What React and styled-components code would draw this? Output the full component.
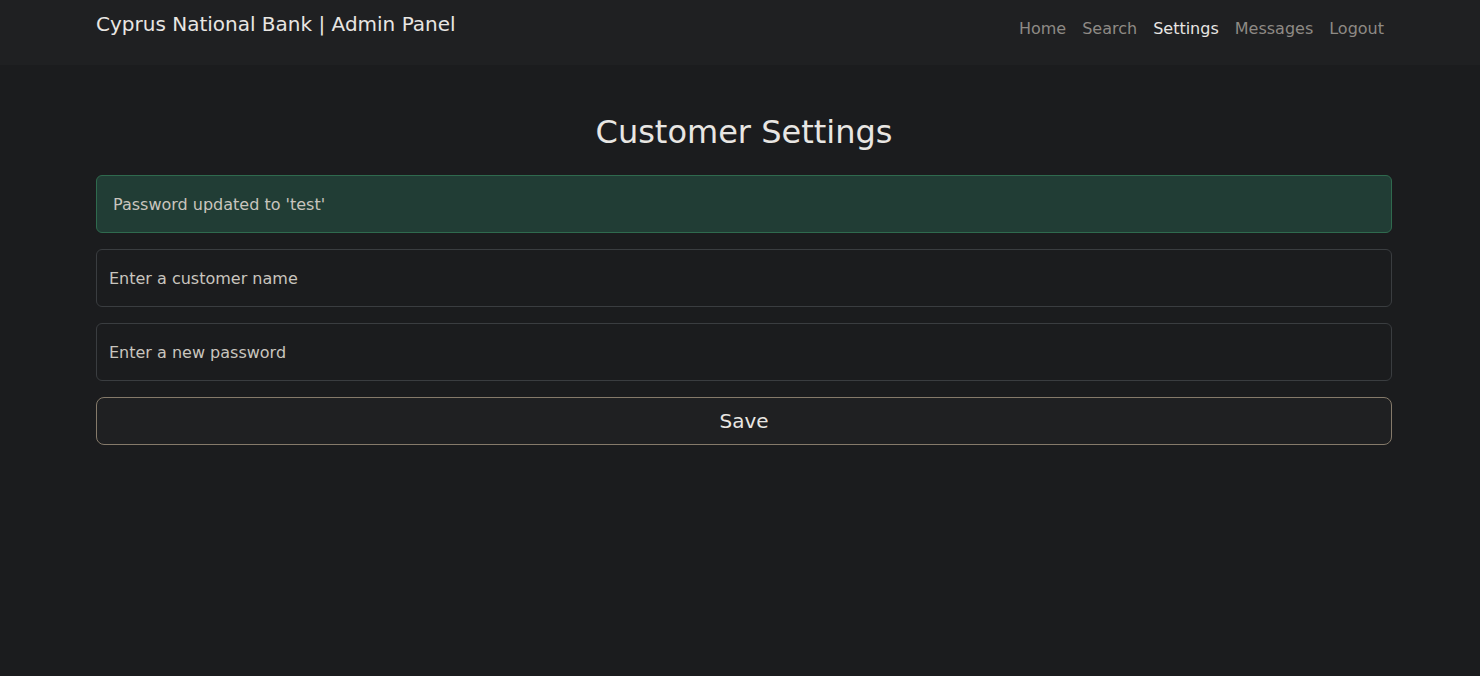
import styled, { createGlobalStyle } from "styled-components";

const GlobalStyle = createGlobalStyle`
   html, body {
      margin: 0;
      padding: 0;
      background-color: #1b1c1e;
      color: #e8e6e3;
      font-family: "DejaVu Sans", "Liberation Sans", sans-serif;
      font-size: 16px;
   }
   * {
      box-sizing: border-box;
   }
`;

const links = ["Home", "Search", "Settings", "Messages", "Logout"];

const App = () => {
   return (
      <>
         <GlobalStyle />
         <Navbar>
            <Container>
               <NavRow>
                  <Brand>Cyprus National Bank | Admin Panel</Brand>
                  <NavList>
                     {links.map((l) => (
                        <NavLink key={l} $active={l === "Settings"}>
                           {l}
                        </NavLink>
                     ))}
                  </NavList>
               </NavRow>
            </Container>
         </Navbar>
         <Container>
            <Title>Customer Settings</Title>
            <Form>
               <Alert>Password updated to 'test'</Alert>
               <Field placeholder="Enter a customer name" />
               <Field type="password" placeholder="Enter a new password" />
               <SaveButton type="button">Save</SaveButton>
            </Form>
         </Container>
      </>
   );
};

const Navbar = styled.nav`
   background-color: #1f2022;
   height: 65px;
   padding-top: 9px;
`;

const Container = styled.div`
   width: 1296px;
   margin-left: 96px;
`;

const NavRow = styled.div`
   display: flex;
   justify-content: space-between;
   align-items: flex-start;
`;

const Brand = styled.div`
   font-size: 20px;
   line-height: 30px;
   color: #e8e6e3;
`;

const NavList = styled.div`
   display: flex;
   padding-top: 8px;
`;

const NavLink = styled.a`
   font-size: 16px;
   line-height: 24px;
   padding: 0 8px;
   color: ${(p) => (p.$active ? "#e8e6e3" : "#8e8a85")};
   cursor: pointer;
`;

const Title = styled.h2`
   margin: 48px 0 24px;
   text-align: center;
   font-size: 32px;
   font-weight: 400;
   line-height: 38px;
   color: #e8e6e3;
`;

const Form = styled.div`
   display: flex;
   flex-direction: column;
   gap: 16px;
`;

const Alert = styled.div`
   height: 58px;
   display: flex;
   align-items: center;
   padding: 0 16px;
   background-color: #213d35;
   border: 1px solid #2f6a4e;
   border-radius: 6px;
   color: #c9c5be;
   font-size: 16px;
`;

const Field = styled.input`
   height: 58px;
   padding: 0 12px;
   background-color: #1b1c1e;
   border: 1px solid #3a3d40;
   border-radius: 6px;
   color: #e8e6e3;
   font-family: inherit;
   font-size: 16px;
   outline: none;

   &::placeholder {
      color: #c9c5be;
      opacity: 1;
   }
`;

const SaveButton = styled.button`
   height: 48px;
   background-color: #1f2022;
   border: 1px solid #857a6a;
   border-radius: 8px;
   color: #e8e6e3;
   font-family: inherit;
   font-size: 20px;
   cursor: pointer;
`;

export default App;
